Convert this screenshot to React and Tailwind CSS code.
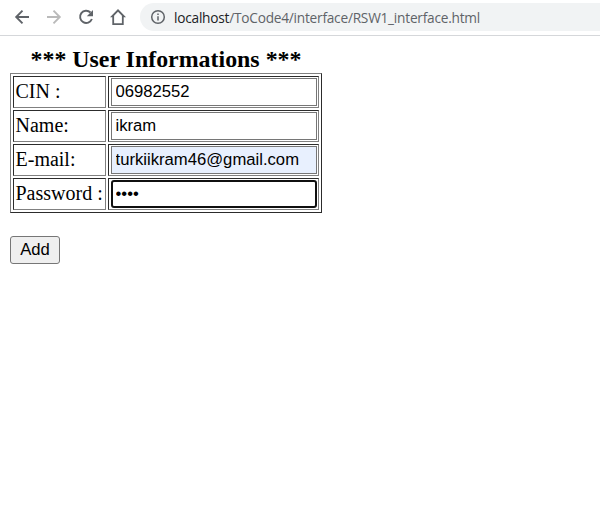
const labelCell =
  "flex h-8 w-[93px] items-center border border-t-[#2c2c2c] border-l-[#2c2c2c] border-r-[#808080] border-b-[#808080] pb-[2px] pl-[1.5px] text-[20px] leading-none whitespace-nowrap";
const fieldCell =
  "h-8 w-[211px] border border-t-[#2c2c2c] border-l-[#2c2c2c] border-r-[#808080] border-b-[#808080] pt-px pl-[2px] pr-px";
const field =
  "block h-7 w-[206px] pb-px text-[16.67px] leading-none text-black outline-none font-['Liberation_Sans',Arial,sans-serif]";
const plain = "border border-[#767676] pl-[3.5px]";

const rows = [
  { label: "CIN :", value: "06982552", type: "text", look: plain + " bg-white" },
  { label: "Name:", value: "ikram", type: "text", look: plain + " bg-white" },
  { label: "E-mail:", value: "turkiikram46@gmail.com", type: "text", look: plain + " bg-[#e8f0fe]" },
  { label: "Password :", value: "1234", type: "password", look: "border-2 border-[#101010] rounded-[3px] pl-[2.5px] bg-white" },
];

function Toolbar() {
  return (
    <header className="flex h-9 items-start border-b border-[#d5d7da] bg-white pt-[3px]">
      <div className="flex h-7 w-[140px] shrink-0 items-center pl-3">
        <svg width="20" height="20" viewBox="0 0 20 20" fill="none" stroke="#5f6368" strokeWidth="1.9">
          <path d="M17 10H4.5M10.5 3.7L4.2 10l6.3 6.3" />
        </svg>
        <svg className="ml-3" width="20" height="20" viewBox="0 0 20 20" fill="none" stroke="#bababa" strokeWidth="1.9">
          <path d="M3 10h12.5M9.5 3.7l6.3 6.3l-6.3 6.3" />
        </svg>
        <svg className="ml-3" width="20" height="20" viewBox="0 0 20 20" fill="none">
          <path d="M14.5 5.5A6.1 6.1 0 1 0 15.9 12" stroke="#5f6368" strokeWidth="1.9" />
          <path d="M17 3v6.2h-6.2z" fill="#5f6368" />
        </svg>
        <svg className="ml-3" width="20" height="20" viewBox="0 0 20 20" fill="#5f6368" fillRule="evenodd">
          <path d="M10 2L2 10.2h2.3V18h11.4v-7.8H18zM10 4.8l3.9 4V16.200H6.100V8.800z" />
        </svg>
      </div>
      <div className="flex h-7 flex-1 items-center rounded-l-full bg-[#f1f3f4] pl-[10px]">
        <svg width="16" height="16" viewBox="0 0 16 16" fill="none" stroke="#5f6368" strokeWidth="1.5">
          <circle cx="8" cy="8" r="6.3" />
          <path d="M8 7.2v4.2M8 4.5v1.6" />
        </svg>
        <span className="ml-2 pt-px text-[13.7px] leading-none tracking-[-0.24px] whitespace-nowrap text-[#5f6368] font-['Open_Sans',sans-serif]">
          <span className="text-[#202124]">localhost</span>/ToCode4/interface/RSW1_interface.html
        </span>
      </div>
    </header>
  );
}

export default function App() {
  return (
    <div className="h-[514px] w-[600px] overflow-hidden bg-white text-black font-['Liberation_Serif','Times_New_Roman',serif]">
      <Toolbar />
      <main className="pt-[10px] pl-[10px]">
        <h1 className="h-[27px] pl-[20.5px] text-[23.9px] leading-[27px] font-bold whitespace-nowrap">*** User Informations ***</h1>
        <div className="flex w-[312px] flex-col gap-[2px] border border-t-[#808080] border-l-[#808080] border-r-[#2c2c2c] border-b-[#2c2c2c] p-[2px]">
          {rows.map((r) => (
            <div key={r.label} className="flex gap-[2px]">
              <div className={labelCell}>{r.label}</div>
              <div className={fieldCell}>
                <input readOnly type={r.type} value={r.value} className={field + " " + r.look} />
              </div>
            </div>
          ))}
        </div>
        <button className="mt-[23px] block h-7 w-[50px] rounded-[3px] border border-[#767676] bg-[#efefef] text-center text-[16.67px] leading-none font-['Liberation_Sans',Arial,sans-serif]">
          Add
        </button>
      </main>
    </div>
  );
}
